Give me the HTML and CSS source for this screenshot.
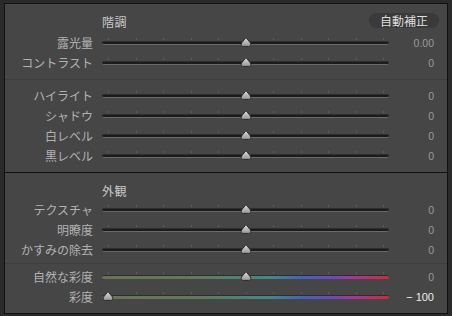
FILE: index.html
```html
<!DOCTYPE html>
<html lang="ja">
<head>
  <meta charset="UTF-8">
  <title>基本補正</title>
  <link rel="stylesheet" href="styles.css">
</head>
<body>

  <svg width="0" height="0" class="defs">
    <defs>
      <linearGradient id="knob" x1="0" y1="0" x2="0" y2="1">
        <stop offset="0" stop-color="#dedede"/>
        <stop offset="1" stop-color="#959595"/>
      </linearGradient>
      <symbol id="thumb" viewBox="0 0 12 10">
        <path d="M6 0.6 L10.5 6 Q11.6 9.4 8.6 9.4 L3.4 9.4 Q0.4 9.4 1.5 6 Z" fill="url(#knob)" stroke="#2a2a2a" stroke-width="1"/>
      </symbol>
    </defs>
  </svg>

  <div class="frame">

    <!-- Tone -->
    <section class="panel tone">
      <div class="panel-head">
        <span class="panel-title">階調</span>
        <button class="auto-btn">自動補正</button>
      </div>

      <div class="row">
        <span class="label">露光量</span>
        <div class="slider" style="--v:0.5">
          <div class="ticks"><i></i><i></i><i></i><i></i><i></i><i></i><i></i><i></i><i></i><i></i><i></i></div>
          <div class="track"></div>
          <svg class="thumb"><use href="#thumb"/></svg>
        </div>
        <span class="value">0.00</span>
      </div>
      <div class="row">
        <span class="label">コントラスト</span>
        <div class="slider" style="--v:0.5">
          <div class="ticks"><i></i><i></i><i></i><i></i><i></i><i></i><i></i><i></i><i></i><i></i><i></i></div>
          <div class="track"></div>
          <svg class="thumb"><use href="#thumb"/></svg>
        </div>
        <span class="value">0</span>
      </div>

      <hr class="divider">

      <div class="row">
        <span class="label">ハイライト</span>
        <div class="slider" style="--v:0.5">
          <div class="ticks"><i></i><i></i><i></i><i></i><i></i><i></i><i></i><i></i><i></i><i></i><i></i></div>
          <div class="track"></div>
          <svg class="thumb"><use href="#thumb"/></svg>
        </div>
        <span class="value">0</span>
      </div>
      <div class="row">
        <span class="label">シャドウ</span>
        <div class="slider" style="--v:0.5">
          <div class="ticks"><i></i><i></i><i></i><i></i><i></i><i></i><i></i><i></i><i></i><i></i><i></i></div>
          <div class="track"></div>
          <svg class="thumb"><use href="#thumb"/></svg>
        </div>
        <span class="value">0</span>
      </div>
      <div class="row">
        <span class="label">白レベル</span>
        <div class="slider" style="--v:0.5">
          <div class="ticks"><i></i><i></i><i></i><i></i><i></i><i></i><i></i><i></i><i></i><i></i><i></i></div>
          <div class="track"></div>
          <svg class="thumb"><use href="#thumb"/></svg>
        </div>
        <span class="value">0</span>
      </div>
      <div class="row">
        <span class="label">黒レベル</span>
        <div class="slider" style="--v:0.5">
          <div class="ticks"><i></i><i></i><i></i><i></i><i></i><i></i><i></i><i></i><i></i><i></i><i></i></div>
          <div class="track"></div>
          <svg class="thumb"><use href="#thumb"/></svg>
        </div>
        <span class="value">0</span>
      </div>
    </section>

    <!-- Presence -->
    <section class="panel presence">
      <div class="panel-head">
        <span class="panel-title">外観</span>
      </div>

      <div class="row">
        <span class="label">テクスチャ</span>
        <div class="slider" style="--v:0.5">
          <div class="ticks"><i></i><i></i><i></i><i></i><i></i><i></i><i></i><i></i><i></i><i></i><i></i></div>
          <div class="track"></div>
          <svg class="thumb"><use href="#thumb"/></svg>
        </div>
        <span class="value">0</span>
      </div>
      <div class="row">
        <span class="label">明瞭度</span>
        <div class="slider" style="--v:0.5">
          <div class="ticks"><i></i><i></i><i></i><i></i><i></i><i></i><i></i><i></i><i></i><i></i><i></i></div>
          <div class="track"></div>
          <svg class="thumb"><use href="#thumb"/></svg>
        </div>
        <span class="value">0</span>
      </div>
      <div class="row">
        <span class="label">かすみの除去</span>
        <div class="slider" style="--v:0.5">
          <div class="ticks"><i></i><i></i><i></i><i></i><i></i><i></i><i></i><i></i><i></i><i></i><i></i></div>
          <div class="track"></div>
          <svg class="thumb"><use href="#thumb"/></svg>
        </div>
        <span class="value">0</span>
      </div>

      <hr class="divider thin">

      <div class="row">
        <span class="label">自然な彩度</span>
        <div class="slider" style="--v:0.5">
          <div class="ticks"><i></i><i></i><i></i><i></i><i></i><i></i><i></i><i></i><i></i><i></i><i></i></div>
          <div class="track color"></div>
          <svg class="thumb"><use href="#thumb"/></svg>
        </div>
        <span class="value">0</span>
      </div>
      <div class="row">
        <span class="label">彩度</span>
        <div class="slider" style="--v:0">
          <div class="ticks"><i></i><i></i><i></i><i></i><i></i><i></i><i></i><i></i><i></i><i></i><i></i></div>
          <div class="track color"></div>
          <svg class="thumb"><use href="#thumb"/></svg>
        </div>
        <span class="value changed">&minus; 100</span>
      </div>
    </section>

  </div>
</body>
</html>
```

FILE: styles.css
```css
body {
  margin: 0;
  background: #2a2a2a;
  font-family: "Noto Sans CJK JP", "Noto Sans", sans-serif;
  font-size: 12px;
  color: #b2b2b2;
}
.defs {
  position: absolute;
}

.frame {
  margin: 3px 4px 0 4px;
  width: 442px;
  border: 1px solid #111;
  background: #111;
}

/* panels */
.panel {
  background: #464646;
}
.tone {
  height: 168px;
  margin-bottom: 1px;
}
.presence {
  height: 140px;
}
.panel-head {
  display: flex;
  align-items: flex-start;
  padding-left: 97px;
  padding-right: 8px;
}
.tone .panel-head {
  height: 20px;
  padding-top: 9px;
}
.presence .panel-head {
  height: 18px;
  padding-top: 9px;
}
.panel-title {
  margin-top: 1px;
  line-height: 16px;
  color: #c6c6c6;
  letter-spacing: 0.5px;
}
.auto-btn {
  margin-left: auto;
  width: 70px;
  height: 15px;
  padding: 0;
  border: none;
  border-radius: 8px;
  background: #3a3a3a;
  color: #dedede;
  font-family: inherit;
  font-size: 12px;
  line-height: 15px;
}

/* dividers */
.divider {
  margin: 6px 0;
  border: none;
  height: 1px;
  background: #3e3e3e;
}
.divider.thin {
  margin: 3px 0;
}

/* slider rows */
.row {
  display: flex;
  align-items: center;
  height: 20px;
}
.label {
  width: 88px;
  margin-right: 9px;
  text-align: right;
  line-height: 16px;
  white-space: nowrap;
}
.slider {
  position: relative;
  width: 287px;
  height: 20px;
}
.ticks {
  display: flex;
  justify-content: space-between;
  height: 2px;
  padding: 0 5px 0 6px;
  margin-top: 5px;
}
.ticks i {
  width: 1px;
  height: 2px;
  background: #5e5e5e;
}
.track {
  margin-top: 1px;
  height: 2px;
  border-radius: 2px;
  background: #1b1b1b;
  border-top: 1px solid #2e2e2e;
  border-bottom: 1px solid #6a6a6a;
}
.track.color {
  height: 3px;
  border-bottom: none;
  background: linear-gradient(to right, #6c705d 0%, #62785f 35%, #4f8383 58%, #4a62a6 70%, #6a4ea6 80%, #9a3f8a 88%, #b0383f 100%);
}
.thumb {
  position: absolute;
  top: 4px;
  left: calc(var(--v) * 275px);
  width: 12px;
  height: 10px;
}
.value {
  flex: 1;
  padding-right: 13px;
  text-align: right;
  font-family: "Liberation Sans", Arial, sans-serif;
  font-size: 10.5px;
  color: #9a9a9a;
}
.value.changed {
  color: #ececec;
  font-size: 11px;
}
```
